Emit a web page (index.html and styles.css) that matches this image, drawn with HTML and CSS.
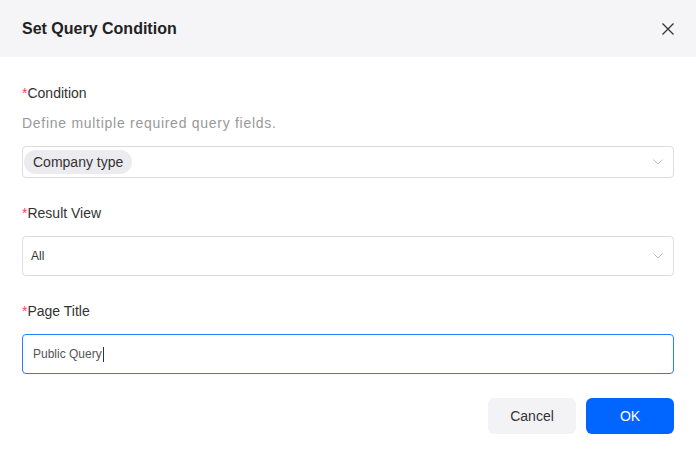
FILE: index.html
```html
<!DOCTYPE html>
<html>
<head>
<meta charset="utf-8">
<link rel="stylesheet" href="styles.css">
</head>
<body>
<div class="dialog">
  <div class="header">
    <div class="title">Set Query Condition</div>
    <svg class="close" width="14" height="14" viewBox="0 0 14 14"><path d="M1.5 1.5L12.5 12.5M12.5 1.5L1.5 12.5" stroke="#333" stroke-width="1.3" fill="none"/></svg>
  </div>
  <div class="body">
    <div class="label"><span class="req">*</span>Condition</div>
    <div class="desc">Define multiple required query fields.</div>
    <div class="select small">
      <span class="tag">Company type</span>
      <svg class="chev" width="10" height="6" viewBox="0 0 10 6"><path d="M0.5 0.5L5 5L9.5 0.5" stroke="#bbb" stroke-width="1" fill="none"/></svg>
    </div>
    <div class="label gap"><span class="req">*</span>Result View</div>
    <div class="select big">
      <span class="value">All</span>
      <svg class="chev" width="10" height="6" viewBox="0 0 10 6"><path d="M0.5 0.5L5 5L9.5 0.5" stroke="#bbb" stroke-width="1" fill="none"/></svg>
    </div>
    <div class="label gap"><span class="req">*</span>Page Title</div>
    <div class="input"><span class="value typed">Public Query</span><span class="caret"></span></div>
    <div class="footer">
      <button class="btn cancel">Cancel</button>
      <button class="btn ok">OK</button>
    </div>
  </div>
</div>
</body>
</html>
```
FILE: styles.css
```css
* { box-sizing: border-box; }
html, body { margin: 0; padding: 0; background: #fff; }
body { font-family: "Liberation Sans", Arial, sans-serif; color: #333; width: 696px; height: 454px; overflow: hidden; }
.header { height: 57px; background: #f5f5f7; display: flex; align-items: center; justify-content: space-between; padding: 0 21px 0 22px; }
.title { font-size: 16px; font-weight: bold; color: #222; margin-top: 1px; }
.close { display: block; }
.body { padding: 26px 22px 0 22px; }
.label { font-size: 14px; line-height: 20px; color: #333; }
.label.gap { margin-top: 25px; }
.req { color: #f5484f; }
.desc { font-size: 14px; letter-spacing: 0.72px; line-height: 20px; color: #999; margin-top: 10px; }
.select, .input { border: 1px solid #dcdcdf; border-radius: 4px; display: flex; align-items: center; justify-content: space-between; margin-top: 13px; }
.select.small { height: 32px; padding: 0 10px 0 1px; }
.select.big { height: 40px; padding: 0 10px 0 8px; }
.tag { background: #ebebf0; border-radius: 12px; height: 24px; line-height: 24px; padding: 0 9px; font-size: 14px; color: #333; }
.value { font-size: 12px; color: #333; }
.chev { display: block; }
.input { height: 40px; border-color: #2080ff; justify-content: flex-start; padding: 0 10px; }
.typed { color: #555; }
.caret { display: inline-block; width: 1px; height: 15px; background: #333; margin-left: 1px; }
.footer { display: flex; justify-content: flex-end; gap: 10px; margin-top: 24px; }
.btn { width: 88px; height: 36px; border: none; border-radius: 6px; font-family: "Liberation Sans", Arial, sans-serif; font-size: 14px; cursor: pointer; }
.cancel { background: #f3f3f6; color: #333; }
.ok { background: #0066ff; color: #fff; }
```
